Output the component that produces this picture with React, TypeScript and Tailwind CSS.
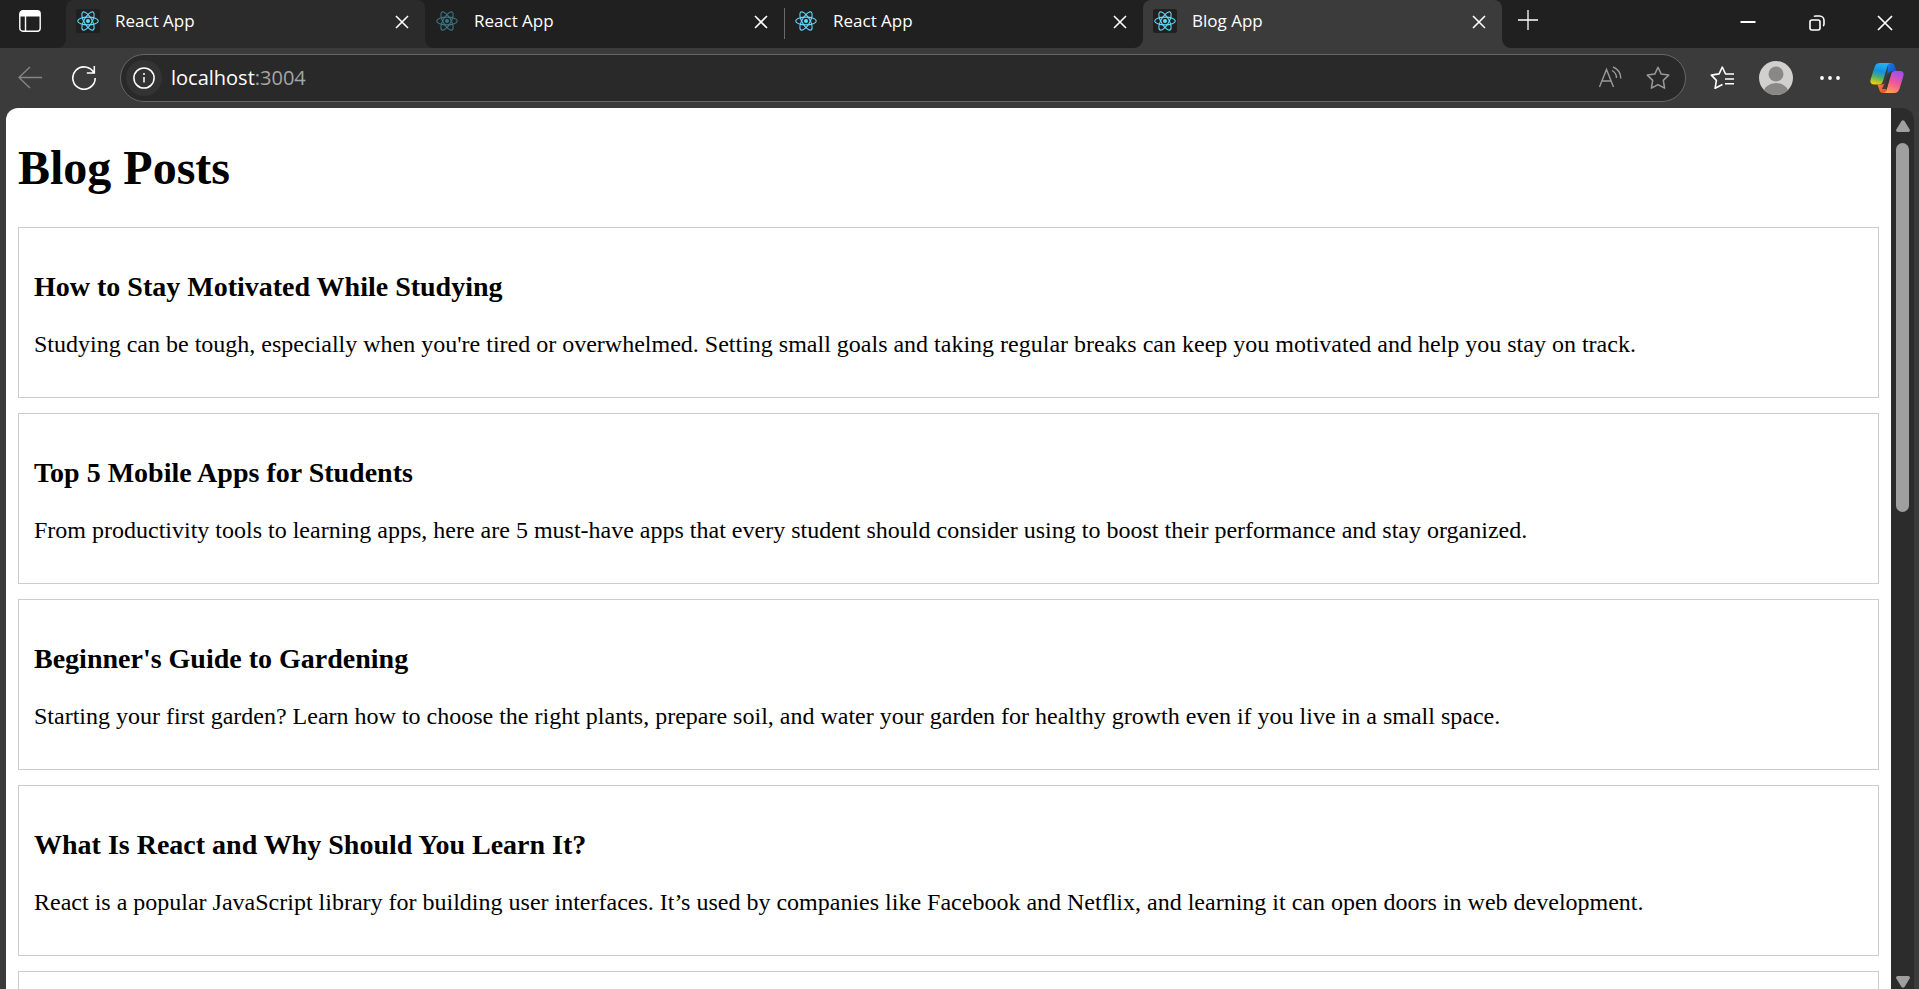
import React from "react";

type Tab = { title: string; state: "hover" | "loading" | "plain" | "active" };

const tabs: Tab[] = [
  { title: "React App", state: "hover" },
  { title: "React App", state: "loading" },
  { title: "React App", state: "plain" },
  { title: "Blog App", state: "active" },
];

const posts = [
  {
    title: "How to Stay Motivated While Studying",
    body: "Studying can be tough, especially when you're tired or overwhelmed. Setting small goals and taking regular breaks can keep you motivated and help you stay on track.",
  },
  {
    title: "Top 5 Mobile Apps for Students",
    body: "From productivity tools to learning apps, here are 5 must-have apps that every student should consider using to boost their performance and stay organized.",
  },
  {
    title: "Beginner's Guide to Gardening",
    body: "Starting your first garden? Learn how to choose the right plants, prepare soil, and water your garden for healthy growth even if you live in a small space.",
  },
  {
    title: "What Is React and Why Should You Learn It?",
    body: "React is a popular JavaScript library for building user interfaces. It’s used by companies like Facebook and Netflix, and learning it can open doors in web development.",
  },
];

const tabColor = {
  hover: "bg-[#2b2b2b] text-[#2b2b2b] z-10",
  loading: "",
  plain: "",
  active: "bg-[#3b3b3b] text-[#3b3b3b] z-10",
};

function ReactLogo({ dim }: { dim: boolean }) {
  return (
    <svg viewBox="0 0 24 24" className={dim ? "size-6 opacity-45" : "size-6"} fill="none" stroke="#61dafb" strokeWidth="1.1">
      <rect width="24" height="24" rx="2.5" fill="#202020" stroke="none" />
      <ellipse cx="12" cy="12" rx="10.3" ry="3.9" />
      <ellipse cx="12" cy="12" rx="10.3" ry="3.9" transform="rotate(60 12 12)" />
      <ellipse cx="12" cy="12" rx="10.3" ry="3.9" transform="rotate(120 12 12)" />
      <circle cx="12" cy="12" r="2" fill="#61dafb" stroke="none" />
    </svg>
  );
}

function Flare({ flip }: { flip: boolean }) {
  return (
    <svg
      viewBox="0 0 9 9"
      className={flip ? "absolute bottom-0 left-full size-[9px] -scale-x-100" : "absolute right-full bottom-0 size-[9px]"}
    >
      <path d="M9 0A9 9 0 0 1 0 9H9z" fill="currentColor" />
    </svg>
  );
}

function TabItem({ tab, divider }: { tab: Tab; divider: boolean }) {
  const raised = tab.state === "hover" || tab.state === "active";
  return (
    <div className={"relative flex h-12 min-w-0 max-w-[359px] flex-1 items-start rounded-t-lg pt-[9px] pr-[10px] pl-[10px] " + tabColor[tab.state]}>
      {raised && <Flare flip={false} />}
      {raised && <Flare flip={true} />}
      {divider && <span className="absolute top-2 left-0 h-[31px] w-px bg-[#6a6a6a]" />}
      <button className="flex min-w-0 flex-1 items-center gap-[15px] text-left text-[17px] leading-6 text-white">
        <ReactLogo dim={tab.state === "loading"} />
        <span className="truncate">{tab.title}</span>
      </button>
      <button aria-label="Close tab" className="flex size-[26px] items-center justify-center text-white">
        <svg viewBox="0 0 14 14" className="size-[14px]" stroke="currentColor" strokeWidth="1.6">
          <path d="M1 1l12 12M13 1L1 13" />
        </svg>
      </button>
    </div>
  );
}

function TabStrip() {
  return (
    <div className="flex h-12 shrink-0 bg-[#202020] text-white">
      <button aria-label="Tab actions" className="flex w-[66px] shrink-0 items-start pt-[10px] pl-[19px]">
        <svg viewBox="0 0 22 22" className="size-[22px]" fill="none" stroke="#fff" strokeWidth="1.4">
          <rect x="0.8" y="0.8" width="20.4" height="20.4" rx="3" />
          <path d="M1 6.500V4q0-3 3-3h14q3 0 3 3v2.500z" fill="#fff" stroke="none" />
          <path d="M6.500 6v15" />
        </svg>
      </button>
      <div className="flex min-w-0 flex-1">
        {tabs.map((tab, i) => (
          <TabItem key={i} tab={tab} divider={i === 2} />
        ))}
        <button aria-label="New tab" className="ml-[14px] flex h-10 w-6 shrink-0 items-center justify-center">
          <svg viewBox="0 0 20 20" className="size-5" stroke="#fff" strokeWidth="1.3">
            <path d="M10 0v20M0 10h20" />
          </svg>
        </button>
      </div>
      <div className="flex shrink-0">
        <button aria-label="Minimize" className="flex h-11 w-[69px] items-center justify-center">
          <svg viewBox="0 0 16 16" className="size-4" stroke="#fff" strokeWidth="2">
            <path d="M0.500 8h15" />
          </svg>
        </button>
        <button aria-label="Restore" className="flex h-[45px] w-[69px] items-center justify-center">
          <svg viewBox="0 0 16 16" className="size-4" fill="none" stroke="#fff" strokeWidth="1.6">
            <rect x="1" y="5" width="10" height="10" rx="2" />
            <path d="M5 1.600C5.500 1 6.200 1 7 1h3.500A4.500 4.500 0 0 1 15 5.500V9c0 1-.3 1.600-.9 2" />
          </svg>
        </button>
        <button aria-label="Close" className="flex h-[45px] w-[68px] items-center justify-center">
          <svg viewBox="0 0 16 16" className="size-4" stroke="#fff" strokeWidth="1.7">
            <path d="M1 1l14 14M15 1L1 15" />
          </svg>
        </button>
      </div>
    </div>
  );
}

const STAR = "M12 1.200l3.200 6.900 7.500 1-5.400 5.300 1.300 7.800L12 18.700l-6.600 3.500 1.300-7.800L1.300 9.100l7.500-1z";

function CopilotLogo() {
  return (
    <svg viewBox="0 0 34 32" className="h-8 w-[34px]">
      <defs>
        <linearGradient id="cp-left" x1="0.6" y1="0" x2="0.35" y2="1">
          <stop offset="0" stopColor="#22b4f5" />
          <stop offset="0.4" stopColor="#1590dc" />
          <stop offset="0.68" stopColor="#52b06c" />
          <stop offset="1" stopColor="#f2d000" />
        </linearGradient>
        <linearGradient id="cp-right" x1="0.7" y1="0" x2="0.3" y2="1">
          <stop offset="0" stopColor="#a14df0" />
          <stop offset="0.5" stopColor="#f0569a" />
          <stop offset="1" stopColor="#ffa04f" />
        </linearGradient>
        <linearGradient id="cp-top" x1="0" y1="0" x2="1" y2="1">
          <stop offset="0" stopColor="#1480e8" />
          <stop offset="1" stopColor="#1746c4" />
        </linearGradient>
        <linearGradient id="cp-bottom" x1="0" y1="0" x2="1" y2="1">
          <stop offset="0" stopColor="#ff8a3c" />
          <stop offset="1" stopColor="#f0433a" />
        </linearGradient>
      </defs>
      <path d="M18 1h3c2 0 3 1 3.500 2.700L26.500 9H23c-3 0-4.500 1-5.500 4z" fill="url(#cp-top)" />
      <path d="M16 31h-3c-2 0-3-1-3.500-2.700L7.500 22.500H11c3 0 4.500-1 5.500-4z" fill="url(#cp-bottom)" />
      <path d="M10 1h11c-2 0-3 1.200-3.700 3.500l-4.200 14.200c-.8 2.800-2 3.800-4.300 3.800H4c-3.200 0-4.200-2-3.300-5.300L4.500 5.200C5.500 2.400 7 1 10 1z" fill="url(#cp-left)" />
      <path d="M24 31H13c2 0 3-1.200 3.700-3.500l4.200-14.700C21.700 10 22.900 9 25.200 9H30c3.200 0 4.200 2 3.300 5.300l-3.800 12.500C28.500 29.600 27 31 24 31z" fill="url(#cp-right)" />
      <path d="M19.300 11.500h1.900l-4.600 15.500H12l4-9z" fill="#343434" opacity="0.9" />
    </svg>
  );
}

function Toolbar() {
  return (
    <div className="flex h-[60px] shrink-0 items-center bg-[#3b3b3b] pr-[15px] pl-4">
      <button aria-label="Back" className="flex size-7 items-center justify-center">
        <svg viewBox="0 0 24 24" className="size-6" fill="none" stroke="#858585" strokeWidth="1.4">
          <path d="M24 11.500H1M12 1L1 11.500 12 22" />
        </svg>
      </button>
      <button aria-label="Refresh" className="ml-[26px] flex size-7 items-center justify-center">
        <svg viewBox="0 0 24 24" className="size-6" fill="none" stroke="#fff" strokeWidth="1.6">
          <path d="M22 7A11.200 11.200 0 1 0 23.200 12M22.300 0v7h-7.500" />
        </svg>
      </button>
      <div className="ml-[22px] flex h-12 min-w-0 flex-1 items-center rounded-full border border-[#666666] bg-[#292929] pr-[9px] pl-[5px]">
        <button aria-label="View site information" className="flex size-9 shrink-0 items-center justify-center rounded-full bg-[#333333]">
          <svg viewBox="0 0 22 22" className="size-[22px]" fill="none" stroke="#fff" strokeWidth="1.5">
            <circle cx="11" cy="11" r="10.1" />
            <path d="M11 10v5.500M11 6v2" />
          </svg>
        </button>
        <a href="http://localhost:3004" className="ml-[9px] flex-1 truncate text-[20px] leading-7 text-[#a5a5a5]">
          <span className="text-white">localhost</span>:3004
        </a>
        <button aria-label="Read aloud" className="flex size-9 shrink-0 items-center justify-center">
          <svg viewBox="0 0 24 24" className="size-6" fill="none" stroke="#9a9a9a" strokeWidth="1.4">
            <path d="M1.500 21L8.500 3.500 15.500 21M4 15h9M14 4.500a8.500 8.500 0 0 1 4.500 7.500M15 1a12.500 12.500 0 0 1 7.800 11.500" />
          </svg>
        </button>
        <button aria-label="Add to favorites" className="ml-3 flex size-9 shrink-0 items-center justify-center">
          <svg viewBox="0 0 24 24" className="size-6" fill="none" stroke="#9a9a9a" strokeWidth="1.5" strokeLinejoin="round">
            <path d={STAR} />
          </svg>
        </button>
      </div>
      <button aria-label="Favorites" className="ml-[22px] flex size-7 items-center justify-center">
        <svg viewBox="0 0 24 24" className="size-6" fill="none" stroke="#fff" strokeWidth="1.6" strokeLinejoin="round">
          <path d="M24 8h-8.500L12.300 1 9.100 7.900l-7.800 1.200 5.100 5.300-1.300 7.900 7.400-3.800M15 13h9M15 17.800h9" />
        </svg>
      </button>
      <button aria-label="Profile" className="ml-[23px] size-[34px]">
        <svg viewBox="0 0 34 34" className="size-[34px]">
          <defs>
            <clipPath id="avatar">
              <circle cx="17" cy="17" r="17" />
            </clipPath>
          </defs>
          <g clipPath="url(#avatar)">
            <rect width="34" height="34" fill="#d2d0ce" />
            <circle cx="17" cy="13" r="7.500" fill="#8a8886" />
            <ellipse cx="17" cy="32" rx="12.500" ry="10" fill="#8a8886" />
          </g>
        </svg>
      </button>
      <button aria-label="Settings and more" className="ml-[25px] flex h-7 w-6 items-center justify-center">
        <svg viewBox="0 0 20 4" className="h-1 w-5" fill="#fff">
          <circle cx="2" cy="2" r="1.900" />
          <circle cx="10" cy="2" r="1.900" />
          <circle cx="18" cy="2" r="1.900" />
        </svg>
      </button>
      <button aria-label="Copilot" className="ml-7">
        <CopilotLogo />
      </button>
    </div>
  );
}

function Scrollbar() {
  return (
    <div className="flex w-[23px] shrink-0 flex-col items-center rounded-tr-xl bg-[#2c2c2c] pt-3">
      <svg viewBox="0 0 14 12" className="h-3 w-[14px]" fill="#9f9f9f">
        <path d="M5.500 1q1.500-1.500 3 0L13.700 9.500q.6 2-1.200 2.500h-11Q-.3 11.500.3 9.500z" />
      </svg>
      <div className="mt-[11px] h-[369px] w-[13px] rounded-full bg-[#9f9f9f]" />
      <svg viewBox="0 0 14 12" className="mt-auto mb-px h-3 w-[14px] rotate-180" fill="#9f9f9f">
        <path d="M5.500 1q1.500-1.500 3 0L13.700 9.500q.6 2-1.200 2.500h-11Q-.3 11.500.3 9.500z" />
      </svg>
    </div>
  );
}

export default function App() {
  return (
    <div className="flex h-screen flex-col overflow-hidden bg-[#3b3b3b] font-['Open_Sans','Noto_Sans',sans-serif]">
      <TabStrip />
      <Toolbar />
      <div className="flex min-h-0 flex-1 pr-[5px] pl-[6px]">
        <main className="min-w-0 flex-1 overflow-hidden rounded-tl-xl bg-white px-3 pt-8 font-['Liberation_Serif',serif] text-black">
          <h1 className="mb-8 text-[48px] leading-[55px] font-bold">Blog Posts</h1>
          <div className="flex flex-col gap-[15px]">
            {posts.map((post) => (
              <article key={post.title} className="border border-[#cccccc] px-[15px] pt-[43px] pb-[39px]">
                <h3 className="mb-7 text-[28px] leading-8 font-bold">{post.title}</h3>
                <p className="text-[24px] leading-[27px]">{post.body}</p>
              </article>
            ))}
            <article className="border border-[#cccccc] px-[15px] pt-[43px] pb-[39px]" />
          </div>
        </main>
        <Scrollbar />
      </div>
    </div>
  );
}
